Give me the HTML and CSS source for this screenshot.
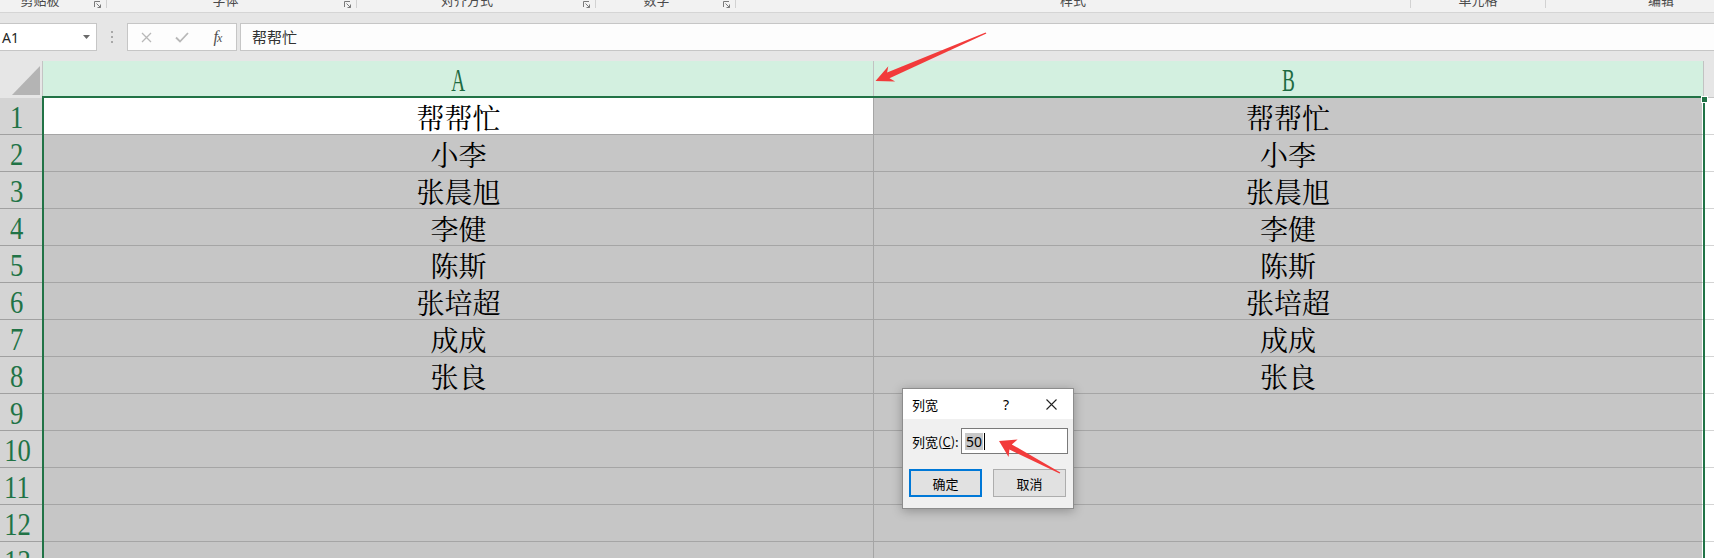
FILE: index.html
```html
<!DOCTYPE html>
<html lang="zh-CN">
<head>
<meta charset="utf-8">
<title>列宽</title>
<link rel="stylesheet" href="styles.css">
</head>
<body>
<div class="app">
  <div class="ribbon">
    <div class="grp g1"><span class="glabel">剪贴板</span><span class="launch"><svg width="7" height="7" viewBox="0 0 7 7"><path d="M0.5 6V0.5H6" fill="none" stroke="#7a7a7a"/><path d="M2.5 2.5L6.5 6.5M6.5 3.5V6.5H3.5" fill="none" stroke="#7a7a7a"/></svg></span></div>
    <div class="grp g2"><span class="glabel">字体</span><span class="launch"><svg width="7" height="7" viewBox="0 0 7 7"><path d="M0.5 6V0.5H6" fill="none" stroke="#7a7a7a"/><path d="M2.5 2.5L6.5 6.5M6.5 3.5V6.5H3.5" fill="none" stroke="#7a7a7a"/></svg></span></div>
    <div class="grp g3"><span class="glabel">对齐方式</span><span class="launch"><svg width="7" height="7" viewBox="0 0 7 7"><path d="M0.5 6V0.5H6" fill="none" stroke="#7a7a7a"/><path d="M2.5 2.5L6.5 6.5M6.5 3.5V6.5H3.5" fill="none" stroke="#7a7a7a"/></svg></span></div>
    <div class="grp g4"><span class="glabel">数字</span><span class="launch"><svg width="7" height="7" viewBox="0 0 7 7"><path d="M0.5 6V0.5H6" fill="none" stroke="#7a7a7a"/><path d="M2.5 2.5L6.5 6.5M6.5 3.5V6.5H3.5" fill="none" stroke="#7a7a7a"/></svg></span></div>
    <div class="grp g5"><span class="glabel">样式</span></div>
    <div class="grp g6"><span class="glabel">单元格</span></div>
    <div class="grp g7"><span class="glabel">编辑</span></div>
  </div>

  <div class="fbar">
    <div class="namebox"><span class="nbtext">A1</span><svg width="7" height="4" viewBox="0 0 7 4"><path d="M0 0H7L3.5 4Z" fill="#6a6a6a"/></svg></div>
    <div class="vdots"><i></i><i></i><i></i></div>
    <div class="fxbox">
      <span class="ic"><svg width="11" height="11" viewBox="0 0 11 11"><path d="M1 1L10 10M10 1L1 10" stroke="#b8b8b8" stroke-width="1.3"/></svg></span>
      <span class="ic"><svg width="14" height="11" viewBox="0 0 14 11"><path d="M1 5.5L5 9.5L13 1" fill="none" stroke="#b8b8b8" stroke-width="1.8"/></svg></span>
      <span class="ic fx"><span class="fxf">f</span><span class="fxx">x</span></span>
    </div>
    <div class="finput">帮帮忙</div>
  </div>

  <div class="sheet">
    <div class="hrow">
      <div class="corner"><svg width="28" height="29" viewBox="0 0 28 29"><path d="M28 0V29H0Z" fill="#b4b4b4"/></svg></div>
      <div class="chead ca"><span class="hl">A</span></div>
      <div class="chead cb"><span class="hl">B</span></div>
      <div class="hfill"></div>
    </div>
    <div class="row"><div class="rh"><span class="rn">1</span></div><div class="cell c1 active"><span class="ct">帮帮忙</span></div><div class="cell c2"><span class="ct">帮帮忙</span></div><div class="cfill"></div></div>
    <div class="row"><div class="rh"><span class="rn">2</span></div><div class="cell c1"><span class="ct">小李</span></div><div class="cell c2"><span class="ct">小李</span></div><div class="cfill"></div></div>
    <div class="row"><div class="rh"><span class="rn">3</span></div><div class="cell c1"><span class="ct">张晨旭</span></div><div class="cell c2"><span class="ct">张晨旭</span></div><div class="cfill"></div></div>
    <div class="row"><div class="rh"><span class="rn">4</span></div><div class="cell c1"><span class="ct">李健</span></div><div class="cell c2"><span class="ct">李健</span></div><div class="cfill"></div></div>
    <div class="row"><div class="rh"><span class="rn">5</span></div><div class="cell c1"><span class="ct">陈斯</span></div><div class="cell c2"><span class="ct">陈斯</span></div><div class="cfill"></div></div>
    <div class="row"><div class="rh"><span class="rn">6</span></div><div class="cell c1"><span class="ct">张培超</span></div><div class="cell c2"><span class="ct">张培超</span></div><div class="cfill"></div></div>
    <div class="row"><div class="rh"><span class="rn">7</span></div><div class="cell c1"><span class="ct">成成</span></div><div class="cell c2"><span class="ct">成成</span></div><div class="cfill"></div></div>
    <div class="row"><div class="rh"><span class="rn">8</span></div><div class="cell c1"><span class="ct">张良</span></div><div class="cell c2"><span class="ct">张良</span></div><div class="cfill"></div></div>
    <div class="row"><div class="rh"><span class="rn">9</span></div><div class="cell c1"></div><div class="cell c2"></div><div class="cfill"></div></div>
    <div class="row"><div class="rh"><span class="rn">10</span></div><div class="cell c1"></div><div class="cell c2"></div><div class="cfill"></div></div>
    <div class="row"><div class="rh"><span class="rn">11</span></div><div class="cell c1"></div><div class="cell c2"></div><div class="cfill"></div></div>
    <div class="row"><div class="rh"><span class="rn">12</span></div><div class="cell c1"></div><div class="cell c2"></div><div class="cfill"></div></div>
    <div class="row"><div class="rh"><span class="rn">13</span></div><div class="cell c1"></div><div class="cell c2"></div><div class="cfill"></div></div>
  </div>

  <div class="sel"><i class="handle"></i></div>

  <div class="dlg">
    <div class="dtitle"><span class="dt">列宽</span><span class="dq">?</span><span class="dx"><svg width="11" height="11" viewBox="0 0 11 11"><path d="M0.5 0.5L10.5 10.5M10.5 0.5L0.5 10.5" stroke="#222" stroke-width="1.1"/></svg></span></div>
    <div class="drow">
      <span class="dlabel">列宽(<u>C</u>):</span>
      <div class="dinput"><span class="seltext">50</span><i class="caret"></i></div>
    </div>
    <div class="dbtns">
      <div class="btn primary">确定</div>
      <div class="btn">取消</div>
    </div>
  </div>

  <svg class="arrows" width="1714" height="558" viewBox="0 0 1714 558">
    <polygon points="875.5,81 895.2,81.6 889.5,78.2 986.4,33.6 985.6,32.4 887.1,72.6 888.3,66.2" fill="#f23b3b"/>
    <polygon points="999,441 1008.6,457 1009.4,449.6 1059.6,473.6 1060.3,472.4 1011.8,444.4 1017.6,439.6" fill="#f23b3b"/>
  </svg>
</div>
</body>
</html>
```

FILE: styles.css
```css
* { box-sizing: border-box; }

body {
  margin: 0;
  width: 1714px;
  height: 558px;
  overflow: hidden;
  background: #e6e6e6;
  font-family: "Noto Sans CJK SC", "Noto Sans", sans-serif;
}

.app {
  position: relative;
  width: 1714px;
  height: 558px;
  overflow: hidden;
  background: #e6e6e6;
}

/* ribbon strip (group labels cut at top) */
.ribbon {
  height: 13px;
  background: #f2f2f2;
  border-bottom: 1px solid #d5d5d5;
  display: flex;
  overflow: hidden;
}
.grp {
  flex: 0 0 auto;
  height: 8px;
  display: flex;
  border-right: 1px solid #d2d2d2;
}
.g1 { width: 107px; }
.g2 { width: 250px; }
.g3 { width: 239px; }
.g4 { width: 140px; }
.g5 { width: 675px; }
.g6 { width: 135px; }
.g7 { width: 230px; border-right: none; }
.g1 .glabel { padding-right: 8px; }
.g2 .glabel { padding-left: 6px; }
.glabel {
  flex: 1;
  text-align: center;
  font-size: 13px;
  line-height: 16px;
  margin-top: -8px;
  color: #4a4a4a;
  white-space: nowrap;
}
.launch {
  flex: 0 0 18px;
  display: flex;
  justify-content: center;
  padding-top: 1px;
}

/* formula bar */
.fbar {
  height: 48px;
  padding: 10px 0;
  display: flex;
}
.namebox {
  width: 97px;
  background: #fff;
  border: 1px solid #c6c6c6;
  border-left: none;
  display: flex;
  align-items: center;
  justify-content: space-between;
  padding: 0 6px 0 2px;
}
.nbtext {
  font-family: "Noto Sans", sans-serif;
  font-size: 14px;
  color: #262626;
}
.vdots {
  width: 30px;
  display: flex;
  flex-direction: column;
  align-items: center;
  justify-content: center;
  gap: 3px;
}
.vdots i {
  display: block;
  width: 2px;
  height: 2px;
  background: #a8a8a8;
}
.fxbox {
  width: 110px;
  border: 1px solid #c6c6c6;
  background: #fdfdfd;
  display: flex;
}
.ic {
  width: 36px;
  display: flex;
  align-items: center;
  justify-content: center;
}
.fx {
  font-family: "Liberation Serif", serif;
  font-style: italic;
  color: #505050;
  align-items: baseline;
  padding-top: 4px;
}
.fxf { font-size: 16px; }
.fxx { font-size: 12px; margin-left: -1px; }
.finput {
  flex: 1;
  margin-left: 3px;
  border: 1px solid #c6c6c6;
  border-right: none;
  background: #fdfdfd;
  padding-left: 11px;
  font-size: 15px;
  line-height: 25px;
  color: #333;
}

/* sheet */
.sheet {
  background: #fff;
}
.hrow {
  display: flex;
  height: 37px;
  background: #e6e6e6;
}
.corner {
  width: 43px;
  border-right: 1px solid #c4c4c4;
  display: flex;
  align-items: flex-end;
  justify-content: flex-end;
  padding: 0 2px 3px 0;
}
.chead {
  height: 37px;
  background: #d3f0e0;
  border-bottom: 2px solid #217346;
  border-right: 1px solid #c2c2c2;
  display: flex;
  justify-content: center;
  align-items: center;
  padding-top: 5px;
  color: #1d6a41;
  font-family: "Liberation Serif", serif;
  font-size: 31px;
}
.ca { width: 831px; }
.cb { width: 830px; }
.hl {
  display: inline-block;
  transform: scaleX(0.62);
}
.hfill {
  flex: 1;
  border-bottom: 1px solid #c6c6c6;
}

.row {
  display: flex;
  height: 37px;
}
.rh {
  width: 44px;
  background: #d4d4d4;
  border-bottom: 1px solid #a0a0a0;
  display: flex;
  justify-content: center;
  align-items: center;
  padding-right: 10px;
  padding-top: 3px;
  font-family: "Liberation Serif", serif;
  font-size: 31px;
  color: #217346;
}
.rn {
  display: inline-block;
  transform: scaleX(0.86);
}
.cell {
  background: #c6c6c6;
  border-bottom: 1px solid #a5a5a5;
  border-right: 1px solid #a5a5a5;
  display: flex;
  align-items: center;
  justify-content: center;
  font-family: "Noto Serif CJK SC", "Noto Sans CJK SC", serif;
  font-size: 28px;
  color: #000;
  padding-top: 2px;
}
.c1 { width: 830px; }
.c2 { width: 829px; border-right-color: #fff; }
.active { background: #fff; }
.cfill {
  flex: 1;
  background: #fff;
  border-bottom: 1px solid #d4d4d4;
}

/* selection outline (overlay) */
.sel {
  position: absolute;
  left: 42px;
  top: 96px;
  width: 1663px;
  height: 500px;
  border: 2px solid #217346;
  pointer-events: none;
}
.handle {
  position: absolute;
  right: -5px;
  top: -2px;
  width: 7px;
  height: 7px;
  background: #217346;
  border: 1px solid #fff;
}

/* dialog */
.dlg {
  position: absolute;
  left: 902px;
  top: 388px;
  width: 172px;
  height: 121px;
  border: 1px solid #8c8c8c;
  background: #f0f0f0;
  box-shadow: 0 2px 10px rgba(0, 0, 0, 0.28);
  font-size: 13px;
  color: #000;
}
.dtitle {
  height: 30px;
  background: #fff;
  display: flex;
  align-items: center;
  padding: 0 7px 0 9px;
}
.dt { flex: 1; }
.dq {
  width: 20px;
  text-align: center;
  font-family: "Noto Sans", sans-serif;
  font-size: 14px;
  margin-right: 20px;
}
.dx {
  width: 30px;
  display: flex;
  justify-content: center;
}
.drow {
  display: flex;
  align-items: center;
  margin-top: 9px;
  padding-left: 9px;
  height: 26px;
}
.dlabel {
  width: 49px;
  white-space: nowrap;
}
.dinput {
  width: 107px;
  height: 26px;
  background: #fff;
  border: 1px solid #7a7a7a;
  display: flex;
  align-items: center;
  padding-left: 3px;
}
.seltext {
  background: #c8c8c8;
  font-family: "Noto Sans", sans-serif;
  font-size: 14px;
  line-height: 17px;
  padding: 0 1px;
}
.caret {
  display: block;
  width: 1px;
  height: 17px;
  background: #000;
  margin-left: 1px;
}
.dbtns {
  display: flex;
  gap: 11px;
  margin-top: 15px;
  padding-left: 6px;
}
.btn {
  width: 73px;
  height: 28px;
  background: #e1e1e1;
  border: 1px solid #adadad;
  display: flex;
  align-items: center;
  justify-content: center;
}
.btn.primary {
  border: 2px solid #0078d7;
}

.arrows {
  position: absolute;
  left: 0;
  top: 0;
  pointer-events: none;
}
```
